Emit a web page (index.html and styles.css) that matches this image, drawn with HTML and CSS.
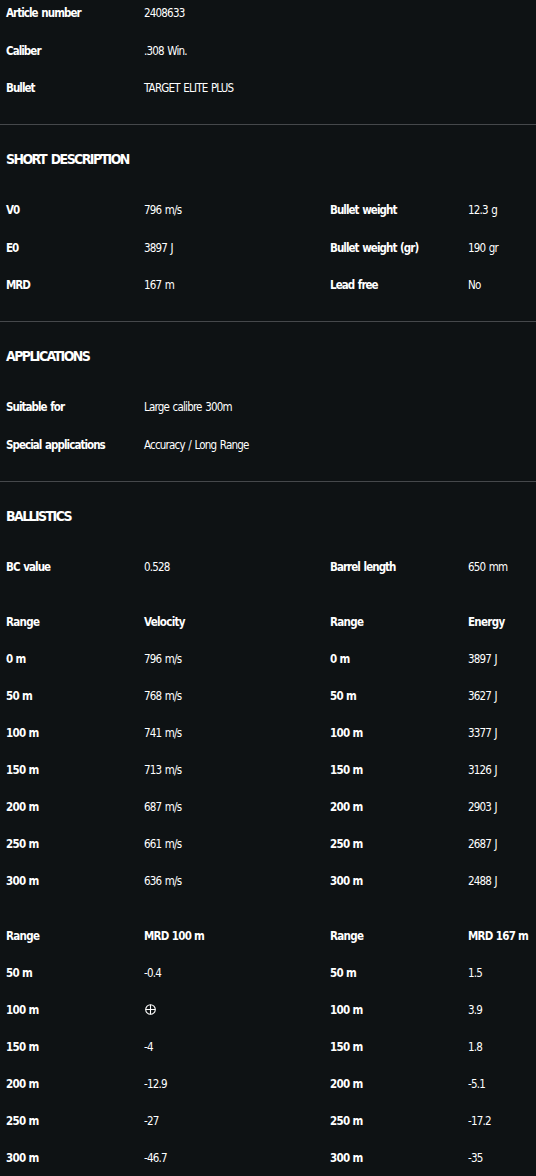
FILE: index.html
```html
<!DOCTYPE html>
<html lang="en">
<head>
    <meta charset="UTF-8">
    <meta name="viewport" content="width=device-width, initial-scale=1.0">
    <title>Product details</title>
    <link rel="stylesheet" href="styles.css">
</head>
<body>

    <!-- Основные данные -->
    <section class="block first">
        <div class="grid info">
            <div class="label">Article number</div><div class="value">2408633</div><div></div><div></div>
            <div class="label">Caliber</div><div class="value">.308 Win.</div><div></div><div></div>
            <div class="label">Bullet</div><div class="value">TARGET ELITE PLUS</div><div></div><div></div>
        </div>
    </section>

    <section class="block">
        <h2>SHORT DESCRIPTION</h2>
        <div class="grid info">
            <div class="label">V0</div><div class="value">796 m/s</div>
            <div class="label">Bullet weight</div><div class="value">12.3 g</div>
            <div class="label">E0</div><div class="value">3897 J</div>
            <div class="label">Bullet weight (gr)</div><div class="value">190 gr</div>
            <div class="label">MRD</div><div class="value">167 m</div>
            <div class="label">Lead free</div><div class="value">No</div>
        </div>
    </section>

    <section class="block">
        <h2>APPLICATIONS</h2>
        <div class="grid info">
            <div class="label">Suitable for</div><div class="value">Large calibre 300m</div><div></div><div></div>
            <div class="label">Special applications</div><div class="value">Accuracy / Long Range</div><div></div><div></div>
        </div>
    </section>

    <section class="block last">
        <h2>BALLISTICS</h2>
        <div class="grid">
            <div class="label">BC value</div><div class="value">0.528</div>
            <div class="label">Barrel length</div><div class="value">650 mm</div>
        </div>

        <div class="grid table">
            <div class="head">Range</div><div class="head">Velocity</div>
            <div class="head">Range</div><div class="head">Energy</div>
            <div class="range">0 m</div><div class="value">796 m/s</div><div class="range">0 m</div><div class="value">3897 J</div>
            <div class="range">50 m</div><div class="value">768 m/s</div><div class="range">50 m</div><div class="value">3627 J</div>
            <div class="range">100 m</div><div class="value">741 m/s</div><div class="range">100 m</div><div class="value">3377 J</div>
            <div class="range">150 m</div><div class="value">713 m/s</div><div class="range">150 m</div><div class="value">3126 J</div>
            <div class="range">200 m</div><div class="value">687 m/s</div><div class="range">200 m</div><div class="value">2903 J</div>
            <div class="range">250 m</div><div class="value">661 m/s</div><div class="range">250 m</div><div class="value">2687 J</div>
            <div class="range">300 m</div><div class="value">636 m/s</div><div class="range">300 m</div><div class="value">2488 J</div>
        </div>

        <div class="grid table">
            <div class="head">Range</div><div class="head">MRD 100 m</div>
            <div class="head">Range</div><div class="head">MRD 167 m</div>
            <div class="range">50 m</div><div class="value">-0.4</div><div class="range">50 m</div><div class="value">1.5</div>
            <div class="range">100 m</div>
            <div class="value">
                <svg class="zero-icon" width="11" height="11" viewBox="0 0 11 11">
                    <circle cx="5.5" cy="5.5" r="4.8" fill="none" stroke="#fff" stroke-width="1.1"/>
                    <path d="M5.5 0.7v9.6M0.7 5.5h9.6" stroke="#fff" stroke-width="1.1"/>
                </svg>
            </div>
            <div class="range">100 m</div><div class="value">3.9</div>
            <div class="range">150 m</div><div class="value">-4</div><div class="range">150 m</div><div class="value">1.8</div>
            <div class="range">200 m</div><div class="value">-12.9</div><div class="range">200 m</div><div class="value">-5.1</div>
            <div class="range">250 m</div><div class="value">-27</div><div class="range">250 m</div><div class="value">-17.2</div>
            <div class="range">300 m</div><div class="value">-46.7</div><div class="range">300 m</div><div class="value">-35</div>
        </div>
    </section>

</body>
</html>
```

FILE: styles.css
```css
/* Основные стили */
:root {
    --background-color: #0e1214;
    --text-color: #ffffff;
    --divider-color: #45484b;
}

body {
    margin: 0;
    padding: 0;
    background-color: var(--background-color);
    color: var(--text-color);
    font-family: "Liberation Sans Narrow", "DejaVu Sans Condensed", "Liberation Sans", sans-serif;
    font-stretch: condensed;
    font-size: 11.5px;
    letter-spacing: -0.8px;
    word-spacing: 1px;
}

.block {
    padding: 21px 6px 23px;
    border-bottom: 1px solid var(--divider-color);
}

.block.first {
    padding-top: 0;
}

.block.last {
    border-bottom: none;
}

h2 {
    margin: 0 0 25px;
    height: 26px;
    line-height: 26px;
    font-size: 14px;
    letter-spacing: -1.6px;
    word-spacing: 2px;
    font-weight: bold;
}

/* Сетка из четырёх колонок */
.grid {
    display: grid;
    grid-template-columns: 138px 186px 138px 1fr;
    grid-auto-rows: 26px;
    row-gap: 11px;
    align-items: center;
    white-space: nowrap;
}

.grid.info {
    row-gap: 11.5px;
}

.table {
    margin-top: 29px;
}

.label {
    font-weight: bold;
    letter-spacing: -0.95px;
}

.head,
.range {
    font-weight: bold;
    letter-spacing: -0.7px;
    word-spacing: 0;
}

.zero-icon {
    display: block;
    margin-left: 1px;
}
```
